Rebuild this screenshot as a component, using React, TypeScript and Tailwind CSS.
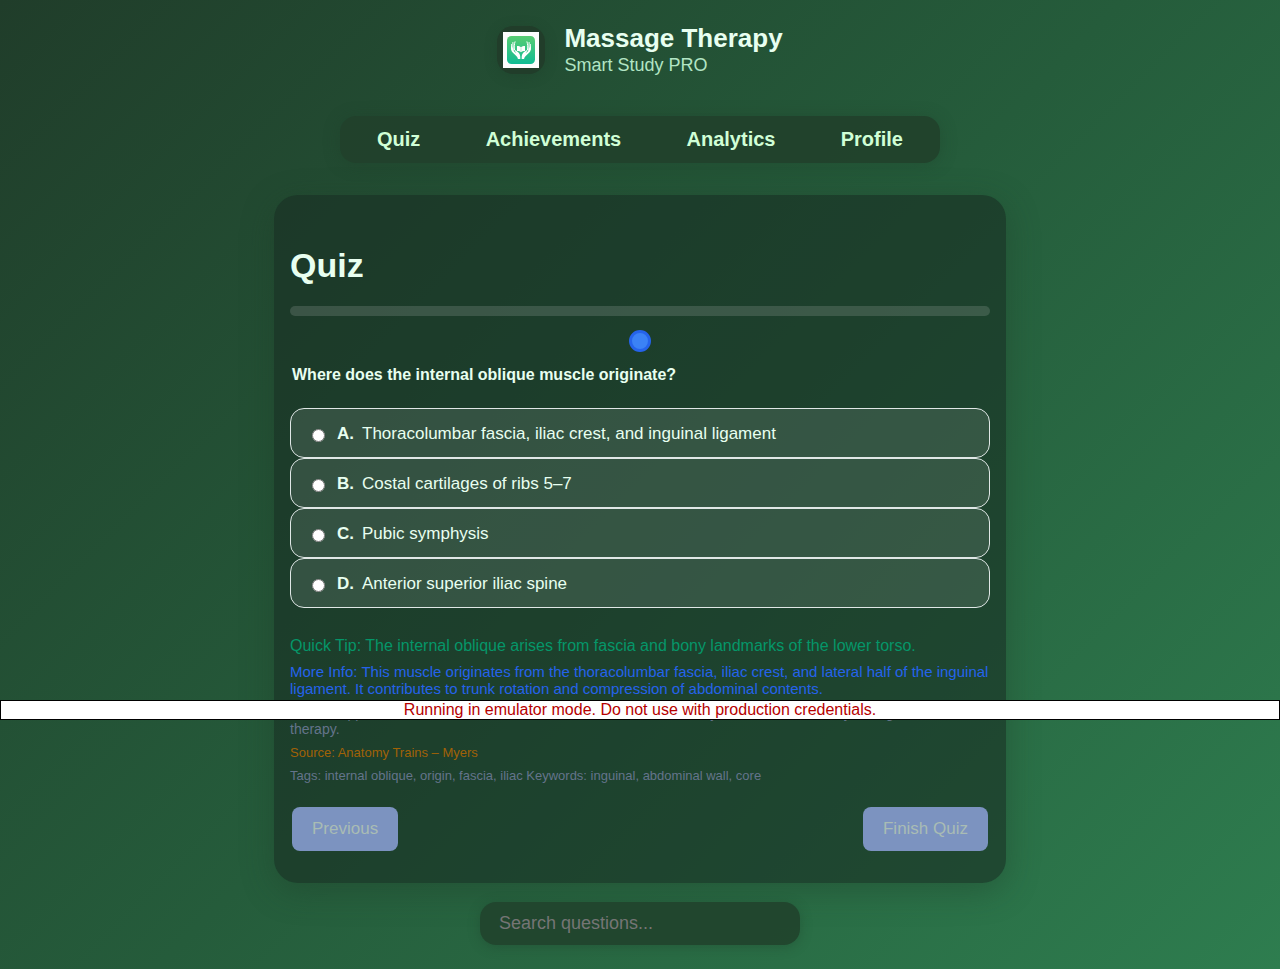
import { useState } from "react";

const tabs = ["Quiz", "Achievements", "Analytics", "Profile"];

const options = [
  { key: "A", text: "Thoracolumbar fascia, iliac crest, and inguinal ligament" },
  { key: "B", text: "Costal cartilages of ribs 5–7" },
  { key: "C", text: "Pubic symphysis" },
  { key: "D", text: "Anterior superior iliac spine" },
];

function Hand() {
  return (
    <g>
      <path
        fill="#fff"
        d="M8.300 13.500c-.7 3.200-.2 5.400 1.400 7.100l3.600 3.300c1 .9 1.500 1.800 1.600 3.100h2.400c.1-3-.3-5-1.800-6.400l-2.600-2.200c-.6-.5-1.300.2-.9.800l1.300 1.800c-1.800-1-3-2.300-3.200-4.200z"
      />
      <path
        fill="none"
        stroke="#fff"
        strokeLinecap="round"
        strokeWidth="1"
        d="M9 17.500L8.600 12.500M10.200 18L9.900 10.500M11.500 18C11 15 11.200 12.500 12 9.800"
      />
    </g>
  );
}

function Logo() {
  return (
    <svg viewBox="0 0 36 36" className="size-9" aria-hidden="true">
      <defs>
        <linearGradient id="logo-fill" x1="0" y1="0" x2="0" y2="1">
          <stop offset="0" stopColor="#58cc72" />
          <stop offset="1" stopColor="#10bc94" />
        </linearGradient>
      </defs>
      <rect width="36" height="36" fill="#fdfdfd" />
      <rect x="4" y="4" width="28" height="28" rx="4.500" fill="url(#logo-fill)" />
      <path
        fill="#fff"
        d="M14 14c1.800 0 3.100.5 4 1.300.9-.8 2.200-1.300 4-1.300v5c-1.800 0-3.100.4-4 1.200-.9-.8-2.200-1.200-4-1.200z"
      />
      <path d="M18 15.400v4.400" stroke="#7dd8a8" strokeWidth=".5" />
      <Hand />
      <g transform="translate(36 0) scale(-1 1)">
        <Hand />
      </g>
    </svg>
  );
}

export default function App() {
  const [choice, setChoice] = useState("");
  const [query, setQuery] = useState("");

  return (
    <div className="flex min-h-screen flex-col items-center bg-[linear-gradient(135deg,#203d2a_0%,#255c3b_50%,#2e7d4f_100%)] px-4 pb-6 font-['Liberation_Sans',Arial,sans-serif] text-[#e8fff0]">
      <header className="flex items-start gap-[19px] pt-6">
        <div className="mt-0.5 flex size-12 items-center justify-center rounded-2xl bg-[#213d2a] shadow-[0_2px_12px_rgba(30,60,40,0.35)]">
          <Logo />
        </div>
        <div>
          <div className="text-[26px] leading-[29px] font-bold">Massage Therapy</div>
          <div className="text-lg leading-6 text-[#b2e5c4]">Smart Study PRO</div>
        </div>
      </header>

      <nav className="mt-[39px] flex w-full max-w-[600px] justify-between rounded-2xl bg-[#21402b]/90 px-[37px] py-3 text-xl leading-[23px] font-bold text-[#d0ffd6] shadow-[0_2px_16px_rgba(30,60,40,0.35)]">
        {tabs.map((tab) => (
          <a key={tab} href={"#" + tab.toLowerCase()}>
            {tab}
          </a>
        ))}
      </nav>

      <main className="mt-8 w-full max-w-[732px] rounded-3xl bg-[#182e23]/62 px-4 pt-[47px] pb-8 shadow-[0_8px_32px_rgba(31,60,40,0.4)]">
        <h1 className="text-[34px] leading-[47px] font-bold">Quiz</h1>
        <div
          role="progressbar"
          aria-label="Quiz progress"
          aria-valuenow={0}
          className="mt-[17px] h-2.5 rounded-md bg-[#e0e0e0]/16"
        />
        <div className="mt-3.5 flex justify-center">
          <button
            aria-label="Question 1"
            className="size-[22px] rounded-full border-3 border-[#2563eb] bg-[#3b82f6]"
          />
        </div>

        <fieldset>
          <legend className="px-0.5 pt-[13px] pb-[23px] text-base leading-5 font-bold">
            Where does the internal oblique muscle originate?
          </legend>
          {options.map(({ key, text }) => (
            <label
              key={key}
              className="flex h-[50px] items-center rounded-[14px] border border-[#e0e7e6] bg-white/11 px-[21px] pt-0.5 text-[17px] leading-5"
            >
              <input
                type="radio"
                name="answer"
                value={key}
                checked={choice === key}
                onChange={() => setChoice(key)}
                className="mt-0.5 mr-3 size-[13px] shrink-0"
              />
              <strong className="mr-2">{key}.</strong>
              <span>{text}</span>
            </label>
          ))}
        </fieldset>

        <section className="mt-[29px]">
          <p className="text-base leading-[18px] text-[#059669]">
            Quick Tip: The internal oblique arises from fascia and bony landmarks of the lower torso.
          </p>
          <p className="mt-2 text-[15px] leading-[17px] text-[#2563eb]">
            More Info: This muscle originates from the thoracolumbar fascia, iliac crest, and lateral half of
            the inguinal ligament. It contributes to trunk rotation and compression of abdominal contents.
          </p>
          <p className="mt-2 text-sm leading-4 text-[#64748b]">
            Clinical Application: Relevant for low back tension and core instability, often treated directly
            during manual therapy.
          </p>
          <p className="mt-2 text-[13px] leading-[15px] text-[#a16207]">Source: Anatomy Trains – Myers</p>
          <p className="mt-2 text-[13px] leading-[15px] text-[#64748b]">
            Tags: internal oblique, origin, fascia, iliac Keywords: inguinal, abdominal wall, core
          </p>
        </section>

        <div className="mt-6 flex justify-between px-0.5 text-[17px] leading-5 text-[#a9bcb4]">
          <button disabled className="rounded-lg bg-[#7c93c0] px-5 py-3">
            Previous
          </button>
          <button disabled className="rounded-lg bg-[#7c93c0] px-5 py-3">
            Finish Quiz
          </button>
        </div>
      </main>

      <input
        type="search"
        aria-label="Search questions"
        placeholder="Search questions..."
        value={query}
        onChange={(event) => setQuery(event.target.value)}
        className="mt-[19px] h-[43px] w-80 max-w-full rounded-2xl bg-[#21452d]/95 px-[19px] text-lg shadow-[0_2px_12px_rgba(30,60,40,0.35)] outline-none placeholder:text-[#757575]"
      />

      <div
        role="status"
        className="fixed inset-x-0 top-[700px] border border-black bg-white text-center text-base leading-[18px] text-[#b50000]"
      >
        Running in emulator mode. Do not use with production credentials.
      </div>
    </div>
  );
}
